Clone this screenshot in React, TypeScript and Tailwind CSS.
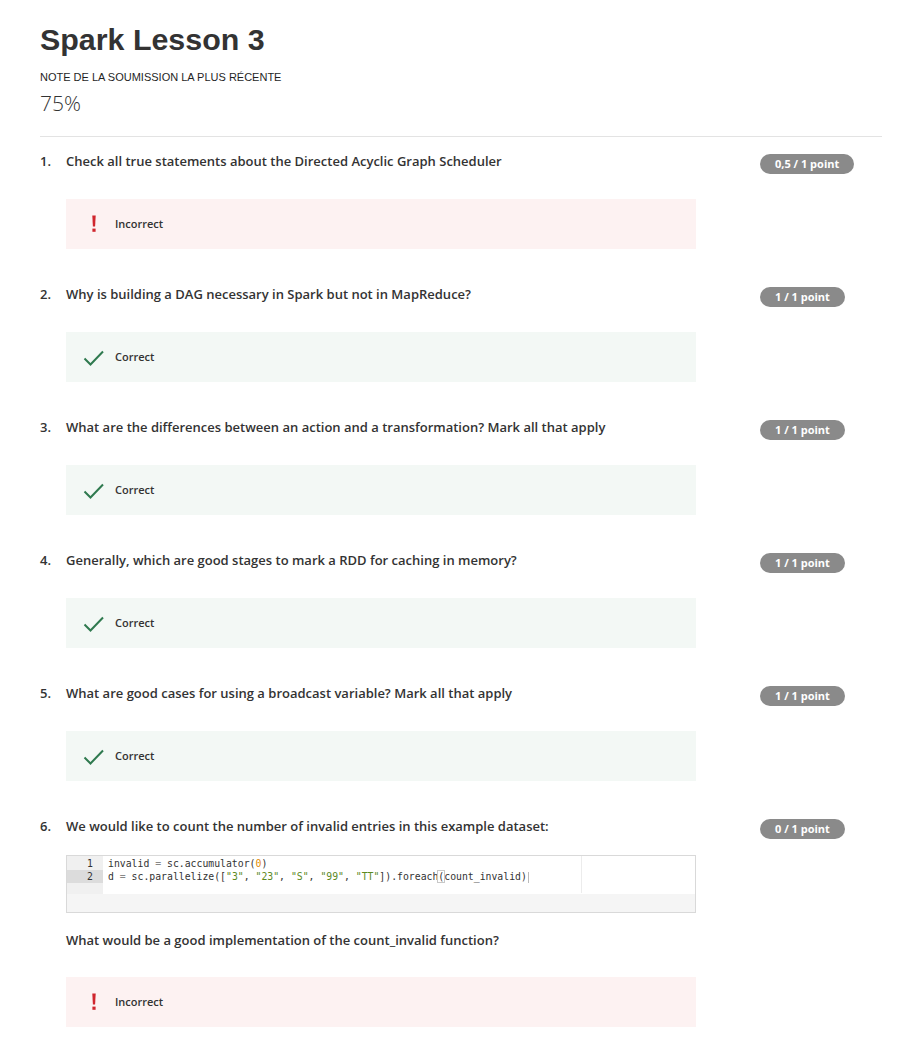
import React from "react";

type Q = { n: number; text: string; score: string; ok: boolean };

const questions: Q[] = [
  { n: 1, text: "Check all true statements about the Directed Acyclic Graph Scheduler", score: "0,5 / 1 point", ok: false },
  { n: 2, text: "Why is building a DAG necessary in Spark but not in MapReduce?", score: "1 / 1 point", ok: true },
  { n: 3, text: "What are the differences between an action and a transformation? Mark all that apply", score: "1 / 1 point", ok: true },
  { n: 4, text: "Generally, which are good stages to mark a RDD for caching in memory?", score: "1 / 1 point", ok: true },
  { n: 5, text: "What are good cases for using a broadcast variable? Mark all that apply", score: "1 / 1 point", ok: true },
];

function Badge({ label }: { label: string }) {
  return (
    <div className="w-[122px] shrink-0">
      <span className="inline-flex h-[20px] items-center rounded-full bg-[#8a8a8a] px-[15px] text-[11px] font-bold leading-none text-white">
        {label}
      </span>
    </div>
  );
}

function Feedback({ ok }: { ok: boolean }) {
  return (
    <div
      className={
        "flex h-[50px] w-[630px] items-center " + (ok ? "bg-[#f3f8f5]" : "bg-[#fdf2f2]")
      }
    >
      <div className="flex w-[49px] justify-end pr-[10px]">
        {ok ? (
          <svg width="22" height="18" viewBox="0 0 22 18" className="mt-[2px]">
            <path d="M1.5 9.5 L7.5 15.5 L20 2.5" fill="none" stroke="#2f7a4f" strokeWidth="2" />
          </svg>
        ) : (
          <svg width="6" height="18" viewBox="0 0 6 18" className="mr-[8px]">
            <path d="M1.3 0.5 H4.7 L4.1 11.5 H1.9 Z" fill="#d0262e" />
            <rect x="1.4" y="13.6" width="3.2" height="3.2" fill="#d0262e" />
          </svg>
        )}
      </div>
      <span className="text-[11px] font-semibold text-[#333]">{ok ? "Correct" : "Incorrect"}</span>
    </div>
  );
}

function QuestionRow({ n, text, score }: { n: number; text: string; score: string }) {
  return (
    <div className="flex h-[20px] items-center">
      <div className="w-[26px] shrink-0 text-[13px] font-semibold text-[#333]">{n}.</div>
      <div className="flex-1 text-[13px] font-semibold text-[#333]">{text}</div>
      <Badge label={score} />
    </div>
  );
}

export default function App() {
  return (
    <div className="min-h-[1046px] bg-white pl-[40px] pr-[28px] pt-[21px]" style={{ fontFamily: "'Open Sans', 'Liberation Sans', sans-serif" }}>
      <h1
        className="text-[30.4px] font-bold leading-[36px] text-[#333]"
        style={{ fontFamily: "'Liberation Sans', Arial, sans-serif" }}
      >
        Spark Lesson 3
      </h1>
      <div
        className="mt-[12px] text-[11px] leading-[16px] text-[#1f1f1f]"
        style={{ fontFamily: "'Liberation Sans', Arial, sans-serif" }}
      >
        NOTE DE LA SOUMISSION LA PLUS RÉCENTE
      </div>
      <div className="mt-[4px] text-[21px] font-light leading-[28px] text-[#333]">75%</div>
      <div className="mt-[19px] h-px w-[842px] bg-[#e3e3e3]" />

      <div className="mt-[15px] flex flex-col">
        {questions.map((q) => (
          <div key={q.n} className="mb-[36px]">
            <QuestionRow n={q.n} text={q.text} score={q.score} />
            <div className="mt-[27px] pl-[26px]">
              <Feedback ok={q.ok} />
            </div>
          </div>
        ))}

        <div>
          <QuestionRow n={6} text="We would like to count the number of invalid entries in this example dataset:" score="0 / 1 point" />
          <div className="mt-[18px] pl-[26px]">
            <div
              className="w-[630px] border border-[#d9d9d9] bg-[#f5f5f5]"
              style={{ fontFamily: "'DejaVu Sans Mono', 'Liberation Mono', monospace" }}
            >
              <div className="flex pb-[11px] bg-white">
                <div className="w-[36px] shrink-0 bg-[#f0f0f0] text-right text-[9.8px] leading-[13px] text-[#333]">
                  <div className="pr-[10px] pt-[1px]">1</div>
                  <div className="bg-[#dcdcdc] pr-[10px]">2</div>
                  <div className="h-[11px] -mb-[11px] bg-[#f0f0f0]" />
                </div>
                <div className="relative flex-1 pl-[5px] pt-[1px] text-[9.8px] leading-[13px] text-[#333] whitespace-pre">
                  <div className="absolute left-[478px] top-0 h-[37px] w-px bg-[#ececec]" />
                  <div>
                    invalid <span className="text-[#888]">=</span> sc.accumulator(<span className="text-[#e08a00]">0</span>)
                  </div>
                  <div>
                    d <span className="text-[#888]">=</span> sc.parallelize([<span className="text-[#5c8a1f]">"3"</span>, <span className="text-[#5c8a1f]">"23"</span>, <span className="text-[#5c8a1f]">"S"</span>, <span className="text-[#5c8a1f]">"99"</span>, <span className="text-[#5c8a1f]">"TT"</span>]).foreach<span className="outline outline-1 outline-[#c8c8c8]">(</span>count_invalid<span>)</span><span className="ml-[1px] inline-block h-[11px] w-px bg-[#bbb] align-middle" />
                  </div>
                </div>
              </div>
              <div className="h-[18px]" />
            </div>
          </div>
          <div className="mt-[18px] flex h-[20px] items-center pl-[26px] text-[13px] font-semibold text-[#333]">
            What would be a good implementation of the count_invalid function?
          </div>
          <div className="mt-[26px] pl-[26px]">
            <Feedback ok={false} />
          </div>
        </div>
      </div>
    </div>
  );
}
